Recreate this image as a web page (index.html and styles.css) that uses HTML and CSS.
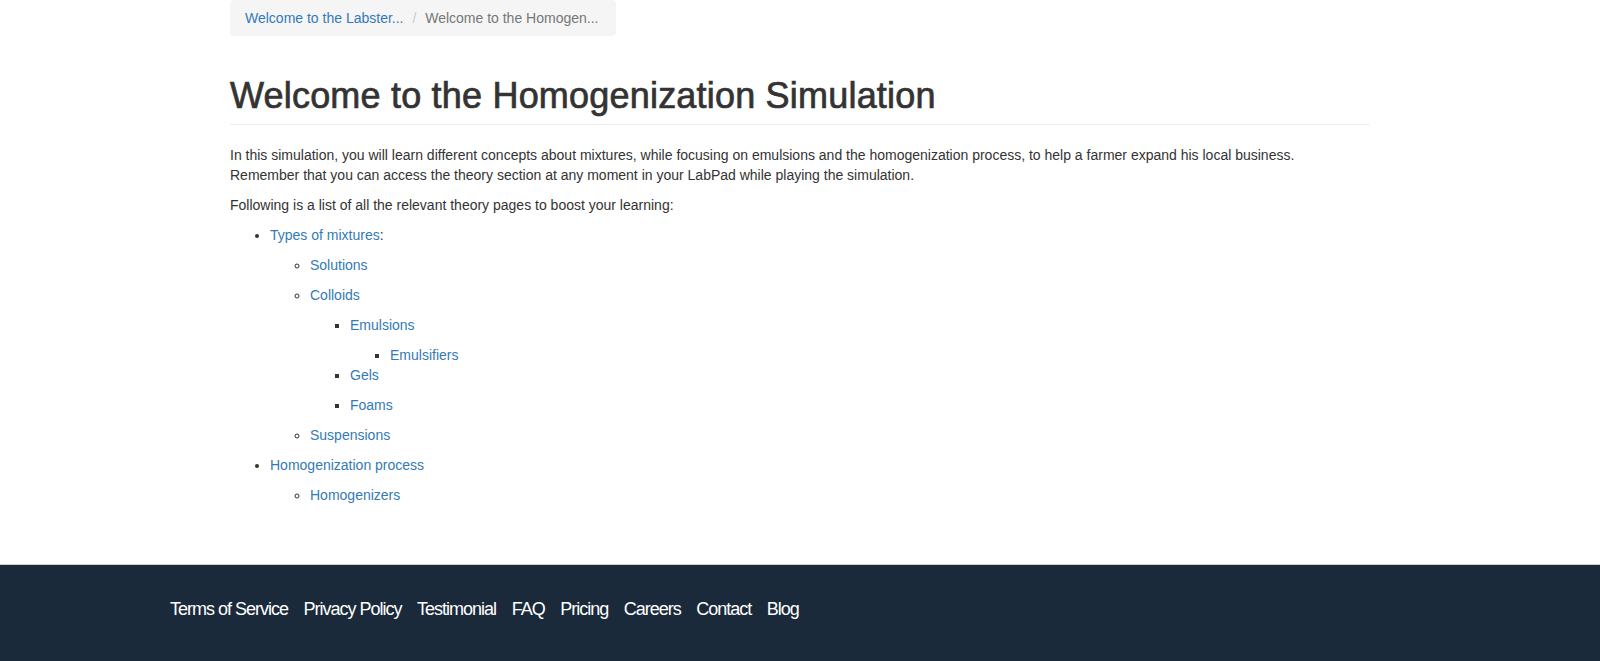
FILE: index.html
```html
<!DOCTYPE html>
<html lang="en">
<head>
<meta charset="utf-8">
<title>Welcome to the Homogenization Simulation</title>
<link rel="stylesheet" href="styles.css">
</head>
<body>
<main class="container">
  <ol class="breadcrumb">
    <li><a href="#">Welcome to the Labster...</a></li>
    <li class="active">Welcome to the Homogen...</li>
  </ol>
  <div class="page-header">
    <h1>Welcome to the Homogenization Simulation</h1>
  </div>
  <p>In this simulation, you will learn different concepts about mixtures, while focusing on emulsions and the homogenization process, to help a farmer expand his local business.<br>Remember that you can access the theory section at any moment in your LabPad while playing the simulation.</p>
  <p>Following is a list of all the relevant theory pages to boost your learning:</p>
  <ul class="topics">
    <li><p><a href="#">Types of mixtures</a>:</p>
      <ul>
        <li><p><a href="#">Solutions</a></p></li>
        <li><p><a href="#">Colloids</a></p>
          <ul>
            <li><p><a href="#">Emulsions</a></p>
              <ul>
                <li><a href="#">Emulsifiers</a></li>
              </ul>
            </li>
            <li><p><a href="#">Gels</a></p></li>
            <li><p><a href="#">Foams</a></p></li>
          </ul>
        </li>
        <li><p><a href="#">Suspensions</a></p></li>
      </ul>
    </li>
    <li><p><a href="#">Homogenization process</a></p>
      <ul>
        <li><p><a href="#">Homogenizers</a></p></li>
      </ul>
    </li>
  </ul>
</main>
<footer class="site-footer">
  <div class="footer-inner">
    <nav class="footer-links">
      <a href="#">Terms of Service</a>
      <a href="#">Privacy Policy</a>
      <a href="#">Testimonial</a>
      <a href="#">FAQ</a>
      <a href="#">Pricing</a>
      <a href="#">Careers</a>
      <a href="#">Contact</a>
      <a href="#">Blog</a>
    </nav>
  </div>
</footer>
</body>
</html>
```
FILE: styles.css
```css
html, body {
  margin: 0;
  padding: 0;
}
body {
  font-family: "Liberation Sans", Arial, sans-serif;
  font-size: 14px;
  line-height: 20px;
  color: #333;
  background: #fff;
}
a {
  color: #337ab7;
  text-decoration: none;
}
.container {
  width: 1140px;
  margin: 0 auto;
  padding: 0 0 49px;
}
.breadcrumb {
  list-style: none;
  margin: 0 0 40px;
  padding: 8px 15px;
  background: #f5f5f5;
  border-radius: 4px;
  width: 356px;
  box-sizing: content-box;
}
.breadcrumb li {
  display: inline-block;
}
.breadcrumb li + li::before {
  content: "/\00a0";
  padding: 0 5px;
  color: #ccc;
}
.breadcrumb .active {
  color: #777;
}
.page-header {
  margin: 0 0 20px;
  padding-bottom: 9px;
  border-bottom: 1px solid #eee;
}
.page-header h1 {
  margin: 0;
  font-size: 36px;
  line-height: 39px;
  font-weight: 400;
  letter-spacing: 0.2px;
  -webkit-text-stroke: 0.7px #333;
  color: #333;
}
p {
  margin: 0 0 10px;
}
.topics {
  margin: 0 0 10px;
  padding-left: 40px;
}
.topics ul {
  margin: 0;
  padding-left: 40px;
}
.site-footer {
  background: #1b2a3b;
  border-top: 1px solid #d0d0d0;
  padding: 31px 0 60px;
}
.footer-inner {
  width: 1260px;
  margin: 0 auto;
}
.footer-links {
  display: flex;
  gap: 15.5px;
  font-size: 18px;
  line-height: 26px;
  letter-spacing: -1px;
}
.footer-links a {
  color: #fff;
}
```
